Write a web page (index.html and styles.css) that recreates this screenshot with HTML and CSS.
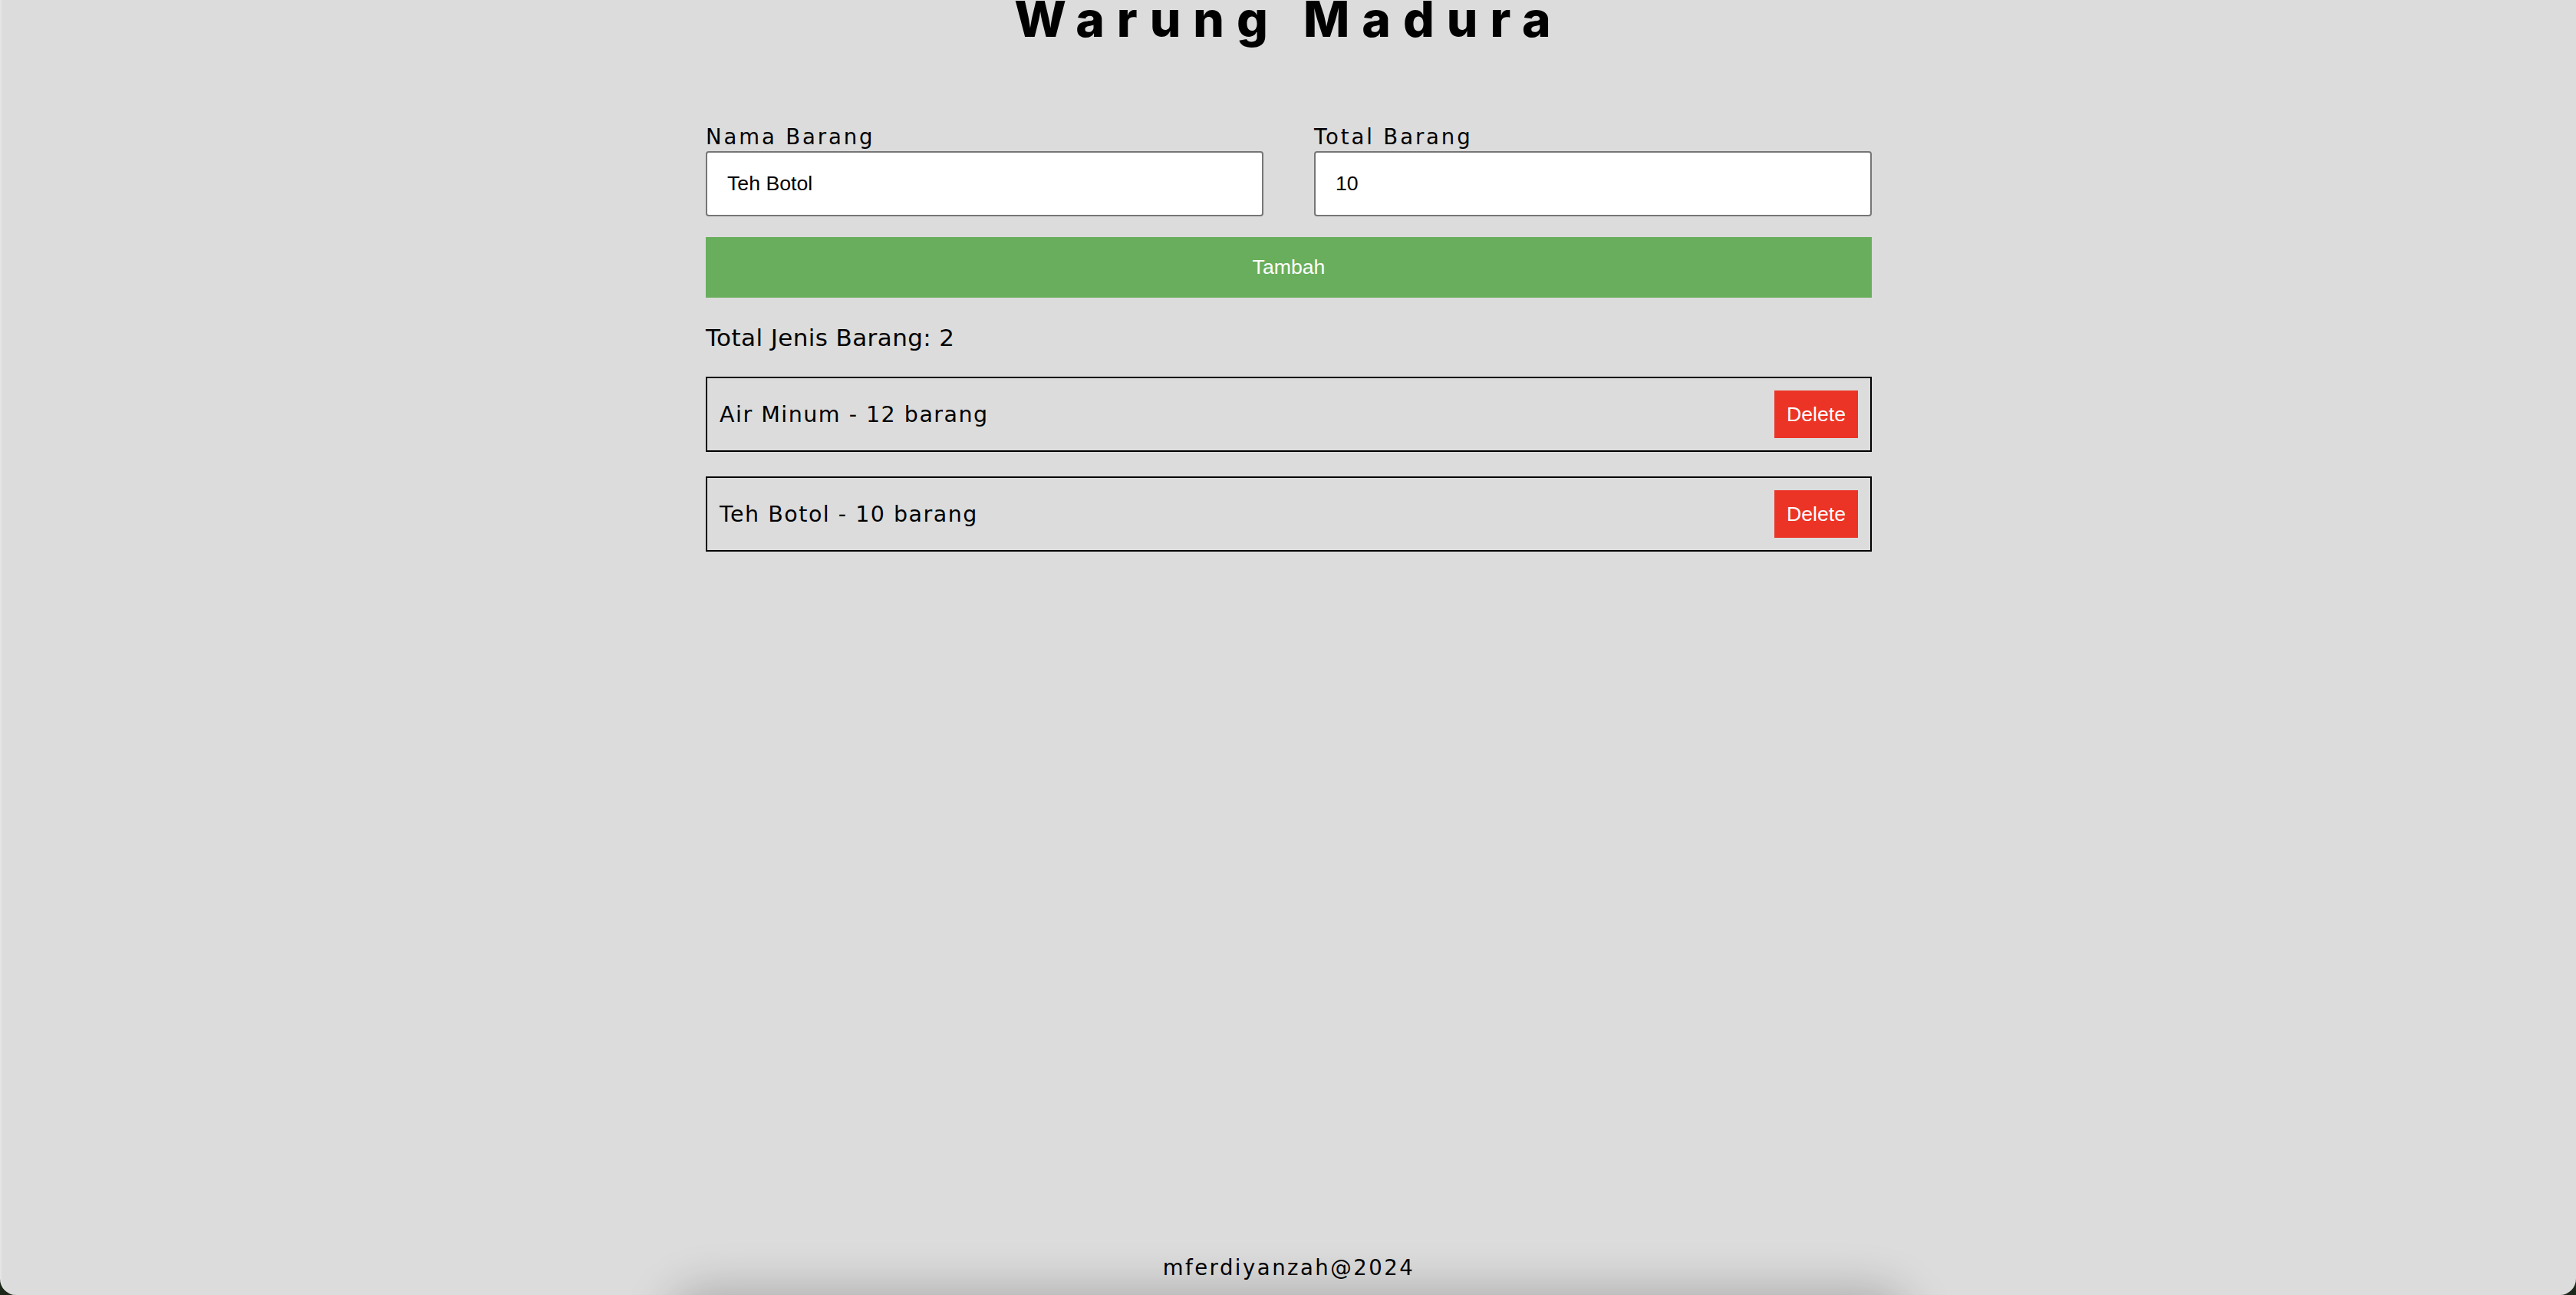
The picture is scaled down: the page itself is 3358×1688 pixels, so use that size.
FILE: index.html
```html
<!DOCTYPE html>
<html lang="id">
<head>
<meta charset="utf-8">
<title>Warung Madura</title>
<link rel="stylesheet" href="styles.css">
</head>
<body>
<div class="window">
  <main class="app">
    <h1 class="title">Warung Madura</h1>
    <form class="form">
      <div class="fields">
        <label class="field">
          <span class="field-label">Nama Barang</span>
          <input class="field-input" type="text" value="Teh Botol">
        </label>
        <label class="field">
          <span class="field-label">Total Barang</span>
          <input class="field-input" type="text" value="10">
        </label>
      </div>
      <button class="btn-add" type="button">Tambah</button>
    </form>
    <p class="summary">Total Jenis Barang: 2</p>
    <ul class="items">
      <li class="item"><span class="item-text">Air Minum - 12 barang</span><button class="btn-delete" type="button">Delete</button></li>
      <li class="item"><span class="item-text">Teh Botol - 10 barang</span><button class="btn-delete" type="button">Delete</button></li>
    </ul>
  </main>
  <footer class="footer">mferdiyanzah@2024</footer>
  <div class="dock-shadow"></div>
</div>
</body>
</html>
```
FILE: styles.css
```css
html, body {
  margin: 0;
  padding: 0;
}

body {
  background: #1c2819;
}

.window {
  position: relative;
  height: 1688px;
  box-sizing: border-box;
  background: #dcdcdc;
  border-left: 2px solid #e5e5e5;
  border-radius: 0 0 21px 21px;
  overflow: hidden;
  display: flex;
  flex-direction: column;
  font-family: "DejaVu Sans", sans-serif;
  color: #000;
}

.app {
  width: 1520px;
  margin: 0 auto;
  flex: 1;
}

.title {
  margin: 0;
  height: 50px;
  line-height: 50px;
  text-align: center;
  font-family: "Inter", sans-serif;
  font-weight: 800;
  font-size: 64px;
  letter-spacing: 16px;
}

.form {
  margin-top: 112px;
}

.fields {
  display: grid;
  grid-template-columns: 1fr 1fr;
  column-gap: 66px;
}

.field {
  display: flex;
  flex-direction: column;
}

.field-label {
  font-size: 27.5px;
  line-height: 32px;
  letter-spacing: 2.9px;
  margin-bottom: 3px;
}

.field-input {
  height: 85px;
  box-sizing: border-box;
  margin: 0;
  border: 2px solid #767676;
  border-radius: 4px;
  padding: 0 26px;
  background: #fff;
  color: #000;
  font-family: "Liberation Sans", Arial, sans-serif;
  font-size: 26.67px;
  outline: none;
}

.btn-add {
  display: block;
  width: 100%;
  height: 79px;
  margin-top: 27px;
  border: 0;
  padding: 0;
  background: #69ae5c;
  color: #fff;
  font-family: "Liberation Sans", Arial, sans-serif;
  font-size: 26.67px;
}

.summary {
  margin: 32px 0 0;
  font-size: 31px;
  line-height: 40px;
  letter-spacing: 0.4px;
}

.items {
  list-style: none;
  margin: 31px 0 0;
  padding: 0;
  display: flex;
  flex-direction: column;
  gap: 32px;
}

.item {
  display: flex;
  align-items: center;
  justify-content: space-between;
  border: 2px solid #000;
  padding: 16px;
}

.item-text {
  font-size: 28.5px;
  letter-spacing: 1.5px;
}

.btn-delete {
  border: 0;
  margin: 0;
  padding: 16px;
  background: #ec3426;
  color: #fff;
  font-family: "Liberation Sans", Arial, sans-serif;
  font-size: 26.67px;
  line-height: 30px;
}

.footer {
  text-align: center;
  font-size: 27.5px;
  line-height: 34px;
  letter-spacing: 2.5px;
  padding-bottom: 19px;
}

.dock-shadow {
  position: absolute;
  left: 50%;
  transform: translateX(-50%);
  top: 1700px;
  width: 1580px;
  height: 60px;
  border-radius: 30px;
  box-shadow: 0 0 60px 20px rgba(0, 0, 0, 0.22);
  pointer-events: none;
}
```
